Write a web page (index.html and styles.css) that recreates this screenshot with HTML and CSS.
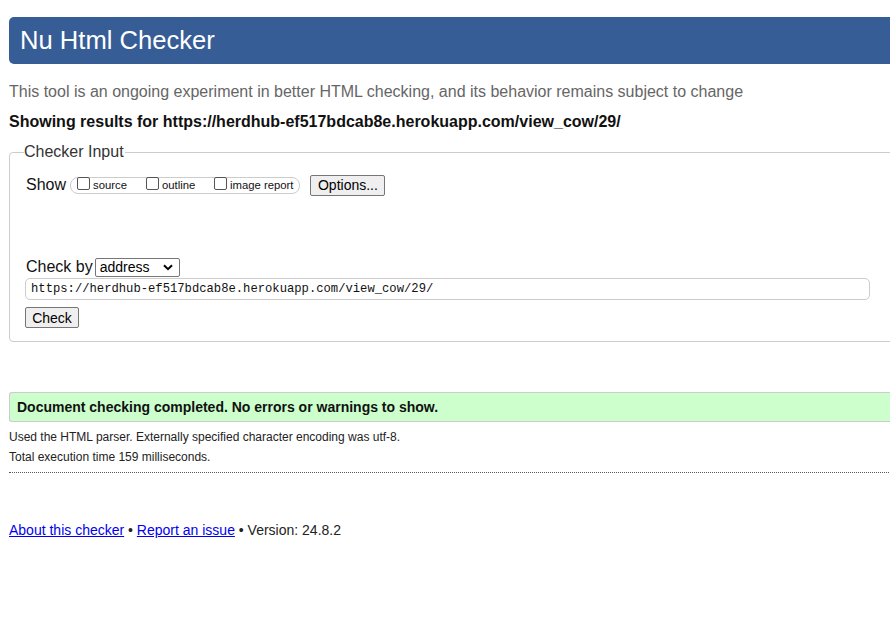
FILE: index.html
```html
<!DOCTYPE html>
<html lang="en">
<head>
<meta charset="utf-8">
<title>Nu Html Checker</title>
<link rel="stylesheet" href="styles.css">
</head>
<body>
<div class="page">
  <h1 class="banner">Nu Html Checker</h1>
  <p class="intro">This tool is an ongoing experiment in better HTML checking, and its behavior remains subject to change</p>
  <p class="showing">Showing results for https://herdhub-ef517bdcab8e.herokuapp.com/view_cow/29/</p>
  <fieldset class="input-box">
    <legend>Checker Input</legend>
    <div class="show-row">
      <span class="show-label">Show</span>
      <span class="show-opts">
        <label class="opt opt-source"><span class="cb"></span>source</label>
        <label class="opt opt-outline"><span class="cb"></span>outline</label>
        <label class="opt"><span class="cb"></span>image report</label>
      </span>
      <span class="btn btn-options">Options...</span>
    </div>
    <div class="checkby-row">
      <span class="checkby-label">Check by</span>
      <span class="select">address<svg class="chev" width="10" height="7" viewBox="0 0 10 7"><path d="M1 1.2 L5 5.2 L9 1.2" fill="none" stroke="#000" stroke-width="2"/></svg></span>
    </div>
    <div class="url-field">https://herdhub-ef517bdcab8e.herokuapp.com/view_cow/29/</div>
    <span class="btn btn-check">Check</span>
  </fieldset>
  <div class="success">Document checking completed. No errors or warnings to show.</div>
  <p class="meta meta-first">Used the HTML parser. Externally specified character encoding was utf-8.</p>
  <p class="meta">Total execution time 159 milliseconds.</p>
  <hr class="dotted">
  <p class="footer"><a href="#">About this checker</a> • <a href="#">Report an issue</a> • Version: 24.8.2</p>
</div>
</body>
</html>
```
FILE: styles.css
```css
html {
  overflow: hidden;
  background: #fff;
}
body {
  margin: 0;
  font-family: "Liberation Sans", Arial, sans-serif;
  color: #000;
}
.page {
  padding: 17px 0 0 9px;
  width: 930px;
}
.banner {
  margin: 0;
  height: 47px;
  box-sizing: border-box;
  background: #365d95;
  color: #fff;
  font-weight: normal;
  font-size: 25.6px;
  line-height: 47px;
  padding-left: 11px;
  border-radius: 5px 0 0 5px;
}
.intro {
  margin: 18px 0 0;
  font-size: 16px;
  line-height: 20px;
  color: #666;
}
.showing {
  margin: 10px 0 0;
  font-size: 16px;
  line-height: 20px;
  font-weight: bold;
  color: #111;
}
.input-box {
  margin: 11px 0 0;
  padding: 14px 15px 13px 15px;
  border: 1px solid #ccc;
  border-radius: 4px;
  min-width: 0;
}
.input-box legend {
  font-size: 16px;
  color: #333;
  padding: 0 1px 0 0;
  margin-left: -1px;
  line-height: 18px;
}
.show-row {
  display: flex;
  align-items: center;
  height: 20px;
  margin-left: 1px;
}
.show-label {
  font-size: 16px;
  color: #111;
  margin-right: 4px;
}
.show-opts {
  display: flex;
  align-items: center;
  height: 17px;
  box-sizing: border-box;
  border: 1px solid #ccc;
  border-radius: 8px;
  padding: 0 6px 0 6px;
  font-size: 11.3px;
  color: #111;
}
.opt {
  display: flex;
  align-items: center;
  line-height: 16px;
}
.opt-source { width: 69px; }
.opt-outline { width: 68px; }
.cb {
  width: 11px;
  height: 11px;
  border: 1px solid #555;
  border-radius: 2px;
  margin: -3px 3px 0 0;
  background: #fff;
}
.btn {
  display: inline-flex;
  align-items: center;
  justify-content: center;
  box-sizing: border-box;
  background: #efefef;
  border: 1px solid #767676;
  border-radius: 2px;
  font-size: 14px;
  color: #000;
}
.btn-options {
  margin-left: 10px;
  width: 75px;
  height: 21px;
}
.checkby-row {
  display: flex;
  align-items: center;
  margin-top: 62px;
  height: 20px;
  margin-left: 1px;
}
.checkby-label {
  font-size: 16px;
  color: #111;
  margin-right: 2px;
}
.select {
  display: flex;
  align-items: center;
  justify-content: space-between;
  box-sizing: border-box;
  width: 85px;
  height: 19px;
  border: 1px solid #767676;
  border-radius: 2px;
  font-size: 14px;
  padding: 0 6px 0 4px;
  background: #fff;
}
.url-field {
  margin-top: 1px;
  width: 845px;
  height: 22px;
  box-sizing: border-box;
  border: 1px solid #ccc;
  border-radius: 5px;
  font-family: "Liberation Mono", "DejaVu Sans Mono", monospace;
  font-size: 12.2px;
  line-height: 20px;
  padding-left: 5px;
  color: #111;
}
.btn-check {
  margin-top: 7px;
  width: 54px;
  height: 21px;
}
.success {
  margin-top: 50px;
  height: 30px;
  box-sizing: border-box;
  background: #ccffcc;
  border: 1px solid #ccc;
  border-right: none;
  border-radius: 3px 0 0 3px;
  font-size: 14px;
  font-weight: bold;
  line-height: 28px;
  padding-left: 7px;
  color: #111;
}
.meta {
  margin: 0;
  font-size: 12px;
  line-height: 20px;
  color: #222;
}
.meta-first {
  margin-top: 5px;
}
.dotted {
  margin: 5px 0 0;
  border: none;
  border-top: 1px dotted #555;
  height: 0;
}
.footer {
  margin: 48px 0 0;
  font-size: 14px;
  line-height: 18px;
  color: #222;
}
.footer a {
  color: #0000ee;
}
```
